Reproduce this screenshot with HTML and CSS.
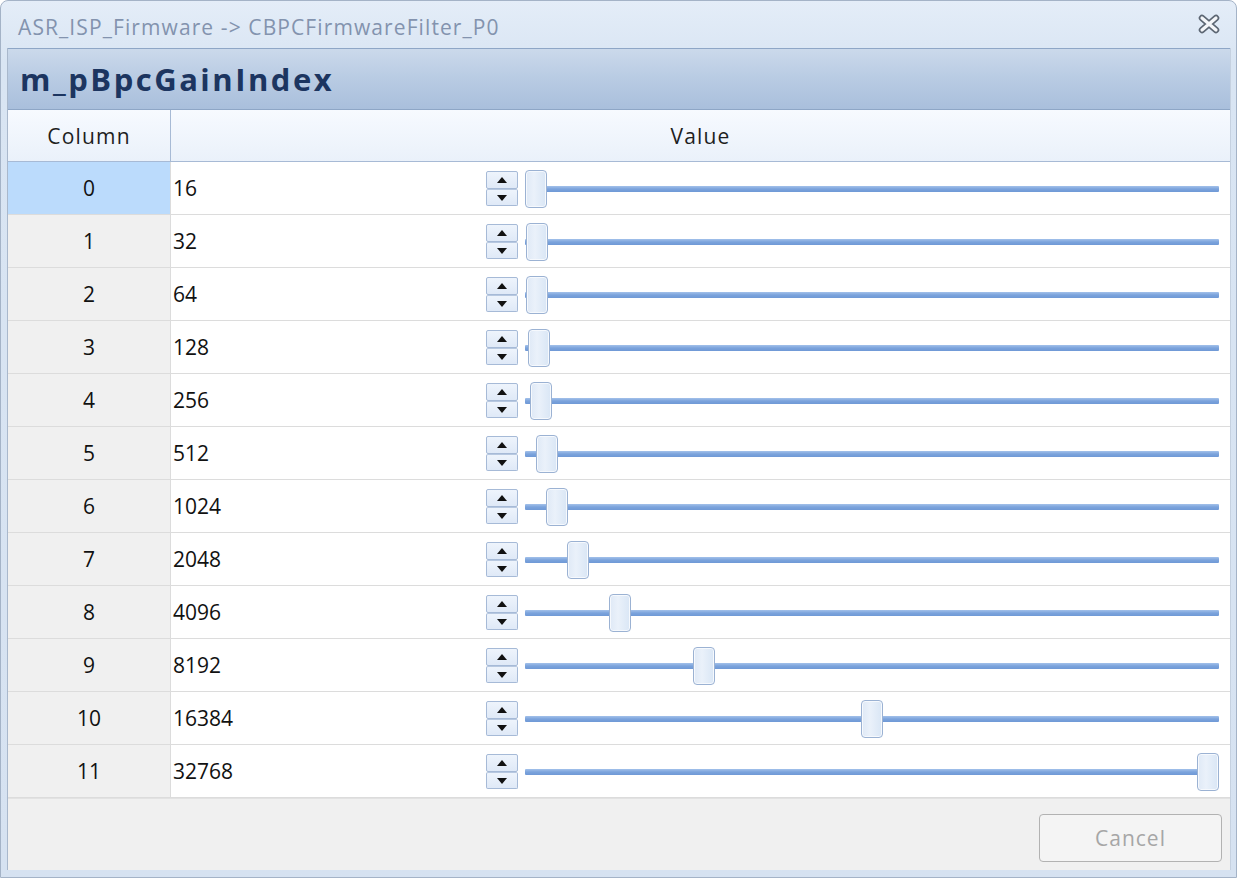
FILE: index.html
```html
<!DOCTYPE html>
<html>
<head>
<meta charset="utf-8">
<link rel="stylesheet" href="styles.css">
</head>
<body>
<div class="window">
  <div class="titlebar">
    <span class="title">ASR_ISP_Firmware -&gt; CBPCFirmwareFilter_P0</span>
    <svg class="close" width="22" height="20" viewBox="0 0 22 20">
      <path d="M4 4 L18 16 M18 4 L4 16" stroke="#5c6673" stroke-width="6.5" stroke-linecap="round" fill="none"/>
      <path d="M4 4 L18 16 M18 4 L4 16" stroke="#f4f6f9" stroke-width="3.2" stroke-linecap="round" fill="none"/>
    </svg>
  </div>
  <div class="client">
    <div class="heading">m_pBpcGainIndex</div>
    <div class="grid">
      <div class="ghead">
        <div class="hc hcol">Column</div>
        <div class="hc hval">Value</div>
      </div>
      <div class="row"><div class="cc sel">0</div><div class="vc"><span class="vt">16</span><div class="spin"><span class="up"></span><span class="dn"></span></div><div class="slider"><div class="track"></div><div class="thumb" style="--f:0.000488"></div></div></div></div>
      <div class="row"><div class="cc">1</div><div class="vc"><span class="vt">32</span><div class="spin"><span class="up"></span><span class="dn"></span></div><div class="slider"><div class="track"></div><div class="thumb" style="--f:0.000977"></div></div></div></div>
      <div class="row"><div class="cc">2</div><div class="vc"><span class="vt">64</span><div class="spin"><span class="up"></span><span class="dn"></span></div><div class="slider"><div class="track"></div><div class="thumb" style="--f:0.001953"></div></div></div></div>
      <div class="row"><div class="cc">3</div><div class="vc"><span class="vt">128</span><div class="spin"><span class="up"></span><span class="dn"></span></div><div class="slider"><div class="track"></div><div class="thumb" style="--f:0.003906"></div></div></div></div>
      <div class="row"><div class="cc">4</div><div class="vc"><span class="vt">256</span><div class="spin"><span class="up"></span><span class="dn"></span></div><div class="slider"><div class="track"></div><div class="thumb" style="--f:0.007813"></div></div></div></div>
      <div class="row"><div class="cc">5</div><div class="vc"><span class="vt">512</span><div class="spin"><span class="up"></span><span class="dn"></span></div><div class="slider"><div class="track"></div><div class="thumb" style="--f:0.015625"></div></div></div></div>
      <div class="row"><div class="cc">6</div><div class="vc"><span class="vt">1024</span><div class="spin"><span class="up"></span><span class="dn"></span></div><div class="slider"><div class="track"></div><div class="thumb" style="--f:0.03125"></div></div></div></div>
      <div class="row"><div class="cc">7</div><div class="vc"><span class="vt">2048</span><div class="spin"><span class="up"></span><span class="dn"></span></div><div class="slider"><div class="track"></div><div class="thumb" style="--f:0.0625"></div></div></div></div>
      <div class="row"><div class="cc">8</div><div class="vc"><span class="vt">4096</span><div class="spin"><span class="up"></span><span class="dn"></span></div><div class="slider"><div class="track"></div><div class="thumb" style="--f:0.125"></div></div></div></div>
      <div class="row"><div class="cc">9</div><div class="vc"><span class="vt">8192</span><div class="spin"><span class="up"></span><span class="dn"></span></div><div class="slider"><div class="track"></div><div class="thumb" style="--f:0.25"></div></div></div></div>
      <div class="row"><div class="cc">10</div><div class="vc"><span class="vt">16384</span><div class="spin"><span class="up"></span><span class="dn"></span></div><div class="slider"><div class="track"></div><div class="thumb" style="--f:0.5"></div></div></div></div>
      <div class="row"><div class="cc">11</div><div class="vc"><span class="vt">32768</span><div class="spin"><span class="up"></span><span class="dn"></span></div><div class="slider"><div class="track"></div><div class="thumb" style="--f:1"></div></div></div></div>
    </div>
    <div class="footer">
      <button class="cancel" disabled>Cancel</button>
    </div>
  </div>
</div>
</body>
</html>
```

FILE: styles.css
```css
html, body {
  margin: 0;
  padding: 0;
  background: #ffffff;
}
body {
  font-family: "Open Sans", "Noto Sans", sans-serif;
}
.window {
  width: 1237px;
  height: 878px;
  box-sizing: border-box;
  border: 1px solid #a4b3c7;
  border-radius: 8px 8px 0 0;
  background: linear-gradient(#e4edf8, #d9e5f3 60px, #d6e2f1);
  padding: 0 5px 7px 6px;
  display: flex;
  flex-direction: column;
}
.titlebar {
  height: 47px;
  flex: 0 0 47px;
  display: flex;
  align-items: center;
  justify-content: space-between;
  padding: 4px 0 0 11px;
  box-sizing: border-box;
}
.title {
  font-size: 21px;
  color: #8393ae;
  letter-spacing: 1.1px;
}
.close {
  margin-right: 11px;
  margin-top: -5px;
}
.client {
  flex: 1;
  display: flex;
  flex-direction: column;
  background: #f0f0f0;
  border-left: 1px solid #a9b8cc;
  border-right: 1px solid #c5d1e0;
}
.heading {
  height: 60px;
  flex: 0 0 60px;
  box-sizing: content-box;
  border-top: 1px solid #8ea6c6;
  border-bottom: 1px solid #8ea6c6;
  background: linear-gradient(#cbd9eb, #b8cbe3 50%, #a9bfdc);
  display: flex;
  align-items: center;
  padding-left: 12px;
  font-weight: 700;
  font-size: 31px;
  color: #1c3560;
  letter-spacing: 2.5px;
}
.grid {
  display: flex;
  flex-direction: column;
  background: #ffffff;
}
.ghead {
  display: flex;
  height: 51px;
  border-bottom: 1px solid #a7bad5;
  background: linear-gradient(#f7faff, #eaf1fa);
}
.hc {
  display: flex;
  align-items: center;
  justify-content: center;
  font-size: 21px;
  letter-spacing: 1.2px;
  color: #1e1e1e;
}
.hcol {
  width: 162px;
  border-right: 1px solid #a7bad5;
}
.hval {
  flex: 1;
}
.row {
  display: flex;
  height: 52px;
  border-bottom: 1px solid #dcdcdc;
}
.cc {
  width: 162px;
  border-right: 1px solid #dcdcdc;
  background: #f0f0f0;
  display: flex;
  align-items: center;
  justify-content: center;
  font-size: 21px;
  color: #111111;
}
.cc.sel {
  background: #bbdbfc;
}
.vc {
  flex: 1;
  display: flex;
  align-items: center;
  padding-left: 2px;
}
.vt {
  width: 313px;
  font-size: 21px;
  color: #111111;
}
.spin {
  width: 32px;
  height: 35px;
  box-sizing: border-box;
  display: flex;
  flex-direction: column;
  margin-top: 1px;
}
.spin span {
  flex: 1;
  border: 1px solid #a6bad7;
  border-radius: 2px;
  background: linear-gradient(#eef4fc, #dfe9f7);
  position: relative;
}
.spin span + span {
  border-top-color: #b7c8e0;
}
.spin span::after {
  content: "";
  position: absolute;
  left: 50%;
  top: 50%;
  width: 0;
  height: 0;
  margin-left: -5px;
  border-left: 5px solid transparent;
  border-right: 5px solid transparent;
}
.spin .up::after {
  margin-top: -3px;
  border-bottom: 6px solid #111111;
}
.spin .dn::after {
  margin-top: -2px;
  border-top: 6px solid #111111;
}
.slider {
  position: relative;
  width: 694px;
  height: 38px;
  margin-left: 7px;
  margin-top: 2px;
  display: flex;
  align-items: center;
}
.track {
  flex: 1;
  height: 6px;
  margin-top: -1px;
  background: linear-gradient(#a3c1ea, #7ba3dc 50%, #6f99d6);
  border-radius: 1px;
}
.thumb {
  position: absolute;
  top: 0;
  left: calc((100% - 22px) * var(--f));
  width: 22px;
  height: 38px;
  box-sizing: border-box;
  border: 1px solid #9bb2d3;
  border-radius: 4px;
  background: linear-gradient(90deg, #dfe9f6, #eaf1fa 40%, #d9e6f5);
  box-shadow: inset 0 0 0 1px #f6f9fd;
}
.footer {
  flex: 1;
  display: flex;
  justify-content: flex-end;
  align-items: flex-end;
  padding: 0 8px 8px 0;
  border-top: 1px solid #e2e2e2;
}
.cancel {
  width: 183px;
  height: 48px;
  border: 1px solid #b2b2b2;
  border-radius: 4px;
  background: #f4f4f4;
  font-family: "Open Sans", "Noto Sans", sans-serif;
  font-size: 21px;
  letter-spacing: 1px;
  color: #a6a6a6;
}
```
